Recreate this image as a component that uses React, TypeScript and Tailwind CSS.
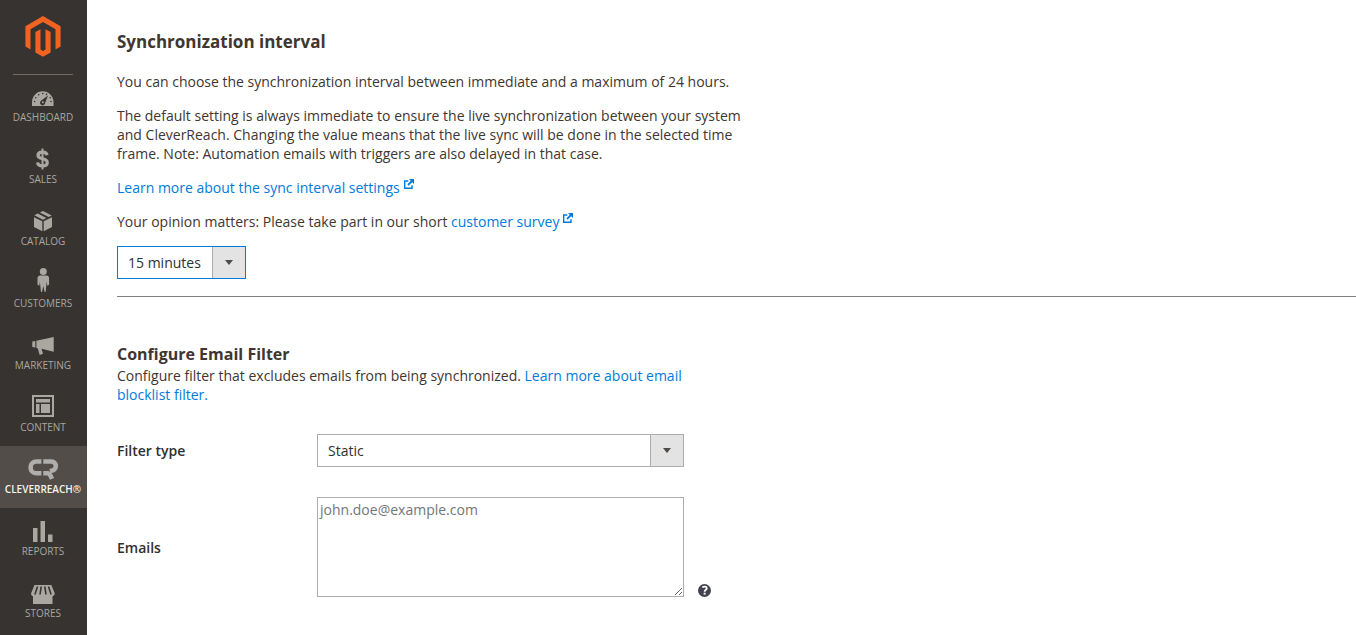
import { useState } from "react";
import type { ReactNode } from "react";

type NavItem = { label: string; icon: ReactNode; active?: boolean };

const navItems: NavItem[] = [
  {
    label: "Dashboard",
    icon: (
      <>
        <path fill="currentColor" d="M6 24v-4a10.75 10.75 0 0 1 21.500 0v4z" />
        <g fill="#373330">
          <circle cx="8.500" cy="19.500" r="0.800" />
          <circle cx="9.700" cy="15.800" r="0.800" />
          <circle cx="12.700" cy="12.800" r="0.800" />
          <circle cx="16.750" cy="11.500" r="0.800" />
          <circle cx="20.500" cy="12.400" r="0.800" />
          <circle cx="24.300" cy="15.800" r="0.800" />
          <circle cx="25" cy="19.500" r="0.800" />
          <path d="M22 13.500l-2.800 7.200a2.600 2.600 0 1 1-3.900-2.300z" />
        </g>
        <circle cx="16.900" cy="20.300" r="1" fill="currentColor" />
      </>
    ),
  },
  {
    label: "Sales",
    icon: (
      <g fill="none" stroke="currentColor">
        <path strokeWidth="2" d="M16.500 4.500v21" />
        <path
          strokeWidth="3.200"
          d="M21 11.200c-.3-2-1.900-3-4.500-3-2.900 0-4.500 1.200-4.500 3.100 0 2.200 1.800 2.900 4.600 3.500 2.900.6 4.700 1.400 4.700 3.700 0 2.200-1.800 3.400-4.700 3.400-3 0-4.800-1.200-5-3.600"
        />
      </g>
    ),
  },
  {
    label: "Catalog",
    icon: (
      <g fill="currentColor">
        <path d="M8 11.200l8.300 4v10.100L8 21z" />
        <path d="M26 11.200l-8.300 4v10.100L26 21z" />
        <path d="M13.800 6.400L17 5l8.700 4.400-3 1.500z" />
        <path d="M8.400 9.300l3.300-1.700 8.700 4.500-3.400 1.700z" />
      </g>
    ),
  },
  {
    label: "Customers",
    icon: (
      <g fill="currentColor">
        <circle cx="17.300" cy="3.500" r="3.500" />
        <path d="M14.300 7.600h6c1.900 0 2.800 1.300 2.800 3v6.200l-1.800 1-.6-4-1 10-1.100.2-1.300-6-1.300 6-1.100-.2-1-10-.6 4-1.800-1v-6.200c0-1.700.9-3 2.800-3z" />
      </g>
    ),
  },
  {
    label: "Marketing",
    icon: (
      <g fill="currentColor">
        <path d="M6.300 11.600l3-.7v6.700l-3-.7z" />
        <path d="M10.400 10.700L27.700 7v14.800l-12.200-3 1.500 5-3.300 1.100-2-6.700-1.300-.3z" />
      </g>
    ),
  },
  {
    label: "Content",
    icon: (
      <>
        <path fill="none" stroke="currentColor" strokeWidth="2" d="M7 4h20v20H7z" />
        <path fill="currentColor" d="M10 7h14v3.500H10zM10 12h3.500v9H10zM15 12h9v9h-9z" />
      </>
    ),
  },
  {
    label: "CleverReach®",
    active: true,
    icon: (
      <g fill="none" stroke="currentColor" strokeWidth="4.600">
        <path d="M15.400 7.500h-4.900a5.900 5.900 0 0 0 0 11.800h4.900" />
        <path d="M17.300 7.500h7.400a4.600 4.600 0 0 1 2.600 8.700l-3.300 1" />
        <path d="M17.300 19.300h5c1.200 0 2.200 2 3.700 5.600" />
      </g>
    ),
  },
  {
    label: "Reports",
    icon: <path fill="currentColor" d="M7 12h4.500v14H7zM14.500 5H19v21h-4.500zM22 18.500h4.500V26H22z" />,
  },
  {
    label: "Stores",
    icon: (
      <>
        <path
          fill="currentColor"
          d="M8.500 7h16.800l3.500 8.600c-.1 2-1.800 2.600-2.300 2.600V26H7v-7.800c-1 0-1.900-.9-2-2.600z"
        />
        <path
          fill="none"
          stroke="#373330"
          strokeWidth="1.600"
          d="M11.500 8.500l-2.600 8M15.200 8.500l-1.200 8M18.800 8.500l1.200 8M22.500 8.500l2.600 8"
        />
      </>
    ),
  },
];

function MagentoLogo() {
  return (
    <svg viewBox="0 0 36 41" className="h-[41px] w-9" fill="#f26322" aria-hidden="true">
      <path d="M18 0l17.600 10.200v20.400l-5.100 2.900V13.200L18 5.900 5.500 13.200v20.300L.4 30.600V10.200z" />
      <path d="M10.400 16.100l5.100-2.900v20.300l2.500 1.500 2.500-1.500V13.200l5.100 2.900v20.400L18 40.800l-7.600-4.300z" />
    </svg>
  );
}

function Sidebar() {
  return (
    <aside className="w-[87px] shrink-0 bg-[#373330]">
      <a href="#home" aria-label="Magento" className="flex h-[74px] items-start justify-center pt-4 pr-px">
        <MagentoLogo />
      </a>
      <nav className="relative before:absolute before:right-[14px] before:left-[13px] before:top-0 before:h-px before:bg-[#736963]">
        <ul>
          {navItems.map((item) => (
            <li key={item.label}>
              <a
                href={"#" + item.label.toLowerCase()}
                aria-current={item.active ? "page" : undefined}
                className={
                  item.active
                    ? "flex h-[62px] flex-col items-center bg-[#524d49] pt-2 pr-px text-[#f7f3eb]"
                    : "flex h-[62px] flex-col items-center pt-2 pr-px text-[#aaa6a0]"
                }
              >
                <svg
                  viewBox="0 0 35 28"
                  aria-hidden="true"
                  className={item.active ? "h-7 w-[35px] text-[#b0aeac]" : "h-7 w-[35px]"}
                >
                  {item.icon}
                </svg>
                <span
                  className={
                    item.active
                      ? "text-[10px] leading-[14px] font-semibold uppercase"
                      : "text-[10px] leading-[14px] uppercase"
                  }
                >
                  {item.label}
                </span>
              </a>
            </li>
          ))}
        </ul>
      </nav>
    </aside>
  );
}

function ExternalIcon() {
  return (
    <svg
      viewBox="0 0 10 10"
      className="ml-1 inline-block size-[10px] -translate-y-[5px]"
      fill="none"
      stroke="currentColor"
      aria-hidden="true"
    >
      <path strokeWidth="1.400" d="M4.300 2H.7v7.300H8V6.200" />
      <path strokeWidth="1.800" d="M4 6l4-4" />
      <path fill="currentColor" stroke="none" d="M5 0h5v5z" />
    </svg>
  );
}

type SelectProps = {
  id: string;
  label?: string;
  options: string[];
  initial: string;
  highlighted?: boolean;
};

function Select({ id, label, options, initial, highlighted }: SelectProps) {
  const [value, setValue] = useState(initial);
  return (
    <div
      className={
        highlighted
          ? "relative w-[129px] border border-[#007bdb]"
          : "relative w-full border border-[#adadad]"
      }
    >
      <select
        id={id}
        aria-label={label}
        value={value}
        onChange={(e) => setValue(e.target.value)}
        className="block h-[31px] w-full appearance-none bg-white pr-9 pl-[10px] text-[#303030] outline-none"
      >
        {options.map((o) => (
          <option key={o}>{o}</option>
        ))}
      </select>
      <span className="pointer-events-none absolute inset-y-0 right-0 flex w-[33px] items-center justify-center border-l border-[#adadad] bg-[#e3e3e3]">
        <svg viewBox="0 0 8 5" className="h-[5px] w-2" fill="#514943" aria-hidden="true">
          <path d="M0 0h8L4 5z" />
        </svg>
      </span>
    </div>
  );
}

export default function App() {
  const link = "text-[#007bdb] hover:underline";
  return (
    <div className="flex min-h-screen bg-white font-['Open_Sans','Noto_Sans',sans-serif] text-[14px] leading-[19px] text-[#41362f]">
      <Sidebar />
      <main className="min-w-0 flex-1 pl-[30px]">
        <section className="border-b border-[#808080] pt-[30px] pb-[17px]">
          <h2 className="text-[17px] leading-6 font-bold">Synchronization interval</h2>
          <div className="mt-[18px] max-w-[640px] space-y-[15px]">
            <p>You can choose the synchronization interval between immediate and a maximum of 24 hours.</p>
            <p>
              The default setting is always immediate to ensure the live synchronization between your system and
              CleverReach. Changing the value means that the live sync will be done in the selected time frame. Note:
              Automation emails with triggers are also delayed in that case.
            </p>
            <p>
              <a href="#sync-interval" className={link}>
                Learn more about the sync interval settings
                <ExternalIcon />
              </a>
            </p>
            <p>
              Your opinion matters: Please take part in our short{" "}
              <a href="#survey" className={link}>
                customer survey
                <ExternalIcon />
              </a>
            </p>
            <Select
              id="interval"
              label="Synchronization interval"
              initial="15 minutes"
              options={["Immediate", "15 minutes", "1 hour", "24 hours"]}
              highlighted
            />
          </div>
        </section>

        <section className="pt-[45px] pb-8">
          <h2 className="text-[16px] leading-6 font-bold">Configure Email Filter</h2>
          <p className="max-w-[600px]">
            Configure filter that excludes emails from being synchronized.{" "}
            <a href="#blocklist" className={link}>
              Learn more about email blocklist filter.
            </a>
          </p>
          <form className="mt-[30px] grid max-w-[600px] grid-cols-[200px_367px_1fr] items-center gap-y-[30px]">
            <label htmlFor="filter-type" className="font-semibold text-[#303030]">
              Filter type
            </label>
            <Select id="filter-type" initial="Static" options={["Static", "Dynamic"]} />
            <span />
            <label htmlFor="emails" className="font-semibold text-[#303030]">
              Emails
            </label>
            <textarea
              id="emails"
              placeholder="john.doe@example.com"
              className="block h-[100px] w-full border border-[#adadad] bg-white p-[2px] text-[#303030] outline-none placeholder:text-[#757575]"
            />
            <button type="button" aria-label="Help" className="ml-[14px] self-end">
              <svg viewBox="0 0 13 13" className="size-[13px]" aria-hidden="true">
                <circle cx="6.500" cy="6.500" r="6.500" fill="#41434e" />
                <path fill="none" stroke="#fff" strokeWidth="1.800" d="M4.300 3.200c1.700-1 4.500-.8 4.500 1 0 1.600-2.200 1.400-2.200 3.600" />
                <path fill="#fff" d="M5.600 8.700h2v1.900h-2z" />
              </svg>
            </button>
          </form>
        </section>
      </main>
    </div>
  );
}
